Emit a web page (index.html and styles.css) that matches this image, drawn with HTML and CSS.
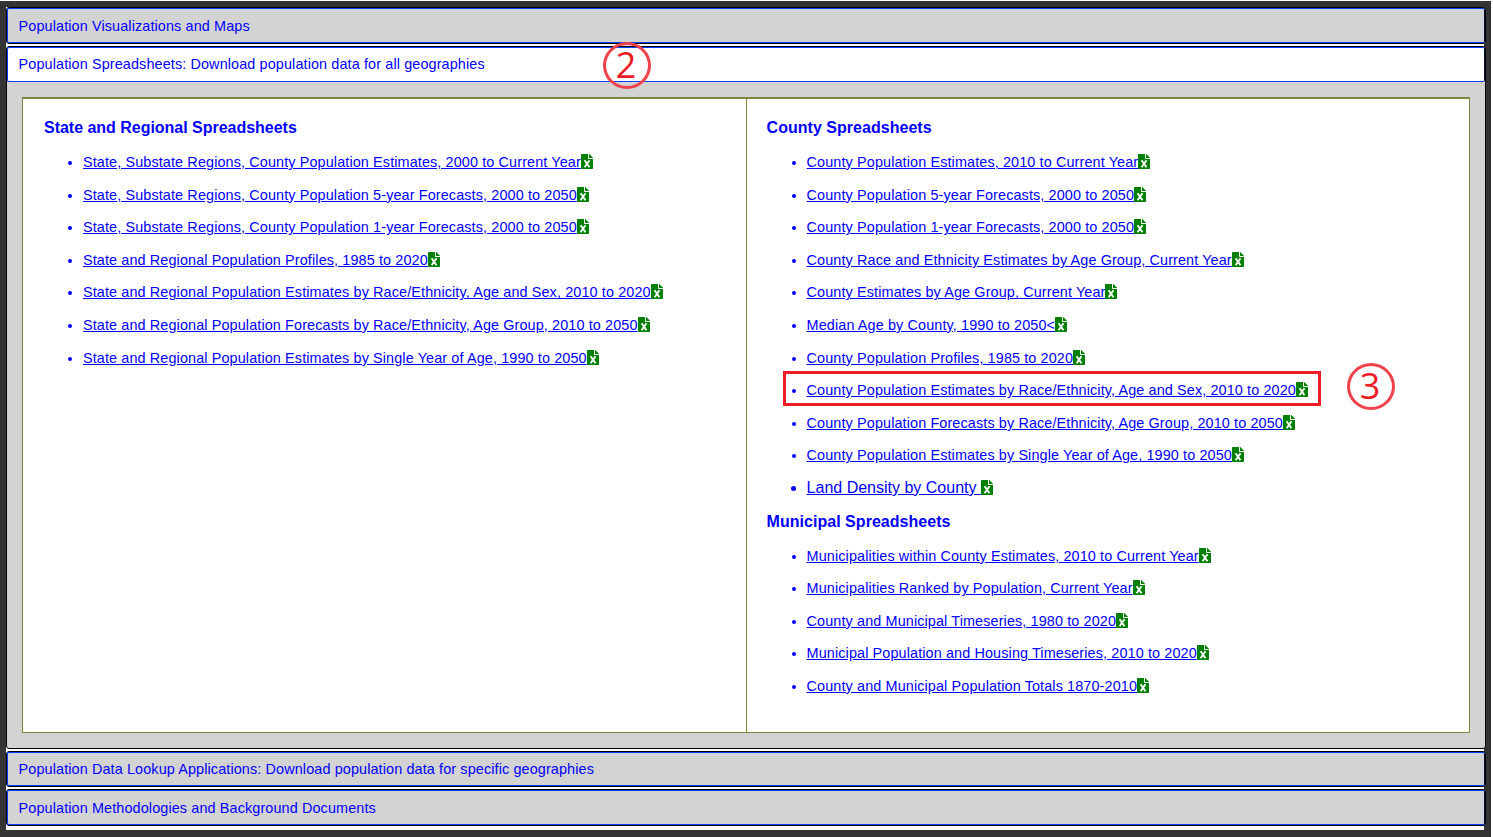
FILE: index.html
```
<!DOCTYPE html>
<html lang="en">
<head>
<meta charset="utf-8">
<title>Population Data</title>
<link rel="stylesheet" href="styles.css">
</head>
<body>
<svg class="defs" width="0" height="0"><symbol id="xls" viewBox="0 0 12 15"><path fill="green" d="M.6 0H7v4.2c0 .5.3.8.8.8H12v9.3c0 .4-.3.7-.7.7H.7c-.4 0-.7-.3-.7-.7V.7C0 .3.3 0 .6 0zM8 0h.3l3.7 3.7V4H8z"/><path fill="none" stroke="#fff" stroke-width="1.9" d="M3.6 6.3l4.9 6.9M8.5 6.3l-4.9 6.9"/></symbol></svg>
<main class="page">
<div class="accordion">
<section class="panel"><h2 class="bar">Population Visualizations and Maps</h2></section>
<section class="panel open"><h2 class="bar">Population Spreadsheets: Download population data for all geographies</h2>
<div class="content"><div class="table">
<div class="cell">
<h3>State and Regional Spreadsheets</h3>
<ul>
<li><a>State, Substate Regions, County Population Estimates, 2000 to Current Year</a><svg class="xls"><use href="#xls"/></svg></li>
<li><a>State, Substate Regions, County Population 5-year Forecasts, 2000 to 2050</a><svg class="xls"><use href="#xls"/></svg></li>
<li><a>State, Substate Regions, County Population 1-year Forecasts, 2000 to 2050</a><svg class="xls"><use href="#xls"/></svg></li>
<li><a>State and Regional Population Profiles, 1985 to 2020</a><svg class="xls"><use href="#xls"/></svg></li>
<li><a>State and Regional Population Estimates by Race/Ethnicity, Age and Sex, 2010 to 2020</a><svg class="xls"><use href="#xls"/></svg></li>
<li><a>State and Regional Population Forecasts by Race/Ethnicity, Age Group, 2010 to 2050</a><svg class="xls"><use href="#xls"/></svg></li>
<li><a>State and Regional Population Estimates by Single Year of Age, 1990 to 2050</a><svg class="xls"><use href="#xls"/></svg></li>
</ul>
</div>
<div class="cell">
<h3>County Spreadsheets</h3>
<ul>
<li><a>County Population Estimates, 2010 to Current Year</a><svg class="xls"><use href="#xls"/></svg></li>
<li><a>County Population 5-year Forecasts, 2000 to 2050</a><svg class="xls"><use href="#xls"/></svg></li>
<li><a>County Population 1-year Forecasts, 2000 to 2050</a><svg class="xls"><use href="#xls"/></svg></li>
<li><a>County Race and Ethnicity Estimates by Age Group, Current Year</a><svg class="xls"><use href="#xls"/></svg></li>
<li><a>County Estimates by Age Group, Current Year</a><svg class="xls"><use href="#xls"/></svg></li>
<li><a>Median Age by County, 1990 to 2050&lt;</a><svg class="xls"><use href="#xls"/></svg></li>
<li><a>County Population Profiles, 1985 to 2020</a><svg class="xls"><use href="#xls"/></svg></li>
<li><a>County Population Estimates by Race/Ethnicity, Age and Sex, 2010 to 2020</a><svg class="xls"><use href="#xls"/></svg></li>
<li><a>County Population Forecasts by Race/Ethnicity, Age Group, 2010 to 2050</a><svg class="xls"><use href="#xls"/></svg></li>
<li><a>County Population Estimates by Single Year of Age, 1990 to 2050</a><svg class="xls"><use href="#xls"/></svg></li>
<li class="large"><a>Land Density by County&nbsp;</a><svg class="xls"><use href="#xls"/></svg></li>
</ul>
<h3>Municipal Spreadsheets</h3>
<ul>
<li><a>Municipalities within County Estimates, 2010 to Current Year</a><svg class="xls"><use href="#xls"/></svg></li>
<li><a>Municipalities Ranked by Population, Current Year</a><svg class="xls"><use href="#xls"/></svg></li>
<li><a>County and Municipal Timeseries, 1980 to 2020</a><svg class="xls"><use href="#xls"/></svg></li>
<li><a>Municipal Population and Housing Timeseries, 2010 to 2020</a><svg class="xls"><use href="#xls"/></svg></li>
<li><a>County and Municipal Population Totals 1870-2010</a><svg class="xls"><use href="#xls"/></svg></li>
</ul>
</div>
</div></div></section>
<section class="panel"><h2 class="bar">Population Data Lookup Applications: Download population data for specific geographies</h2></section>
<section class="panel last"><h2 class="bar">Population Methodologies and Background Documents</h2></section>
</div>
</main>
<div class="mark two">2</div>
<div class="mark three">3</div>
<div class="highlight"></div>
</body>
</html>
```
FILE: styles.css
```
* { box-sizing: border-box; }
body { margin: 0; padding: 1px 2px 0 0; height: 837px; overflow: hidden; background: #fff; font-family: "Liberation Sans", Arial, sans-serif; color: #00f; }
.defs { position: absolute; }
.page { height: 836px; background: #333; padding: 6px 5px 0 6px; }
.accordion { display: flex; flex-direction: column; gap: 2px; height: 823px; background: linear-gradient(to right, #fff 1478px, #333 1478px); }
.panel { border: 1px solid #000; border-radius: 3px; height: 37px; background: #d3d3d3; flex: none; }
.panel:nth-child(3) { height: 36px; }
.panel.open { height: 703px; }
.bar { margin: 0; height: 100%; border: 1px solid #0040ff; border-right-color: #000c40; border-radius: 2px; padding-left: 10.6px; font-weight: 400; font-size: 14.4px; line-height: 35px; letter-spacing: .123px; }
.open .bar { height: 35px; background: #fff; line-height: 32px; }
.panel:nth-child(3) .bar { line-height: 33px; }
.content { padding: 15px 15px 15px 15px; height: 666px; }
.table { display: grid; grid-template-columns: 723px 1fr; height: 636px; border: 1px solid #7c8538; border-top-width: 2px; background: #fff; }
.cell { padding: 19px 0 0 21px; }
.cell + .cell { border-left: 1px solid #7c8538; padding-left: 19.6px; }
h3 { margin: 0; font-size: 16px; line-height: 20px; letter-spacing: -.02px; }
.cell + .cell h3 { letter-spacing: .03px; }
ul { margin: 8px 0 7px; padding-left: 39px; }
.cell + .cell ul { padding-left: 40px; }
li { height: 32.6px; line-height: 32px; font-size: 14.4px; letter-spacing: .123px; white-space: nowrap; }
li a { text-decoration: underline; }
li.large { font-size: 16px; letter-spacing: 0; }
.xls { width: 12px; height: 15px; vertical-align: -2px; }
.mark { position: absolute; width: 48px; height: 47px; border: 3px solid #f0424a; border-radius: 50%; color: #ed1c24; font: 36px/39px "Open Sans", "Noto Sans", sans-serif; text-align: center; padding-right: 2px; }
.two { left: 603px; top: 42px; }
.three { left: 1347px; top: 363px; }
.highlight { position: absolute; left: 783px; top: 371px; width: 538px; height: 35px; border: 3px solid #ed1c24; }
```
